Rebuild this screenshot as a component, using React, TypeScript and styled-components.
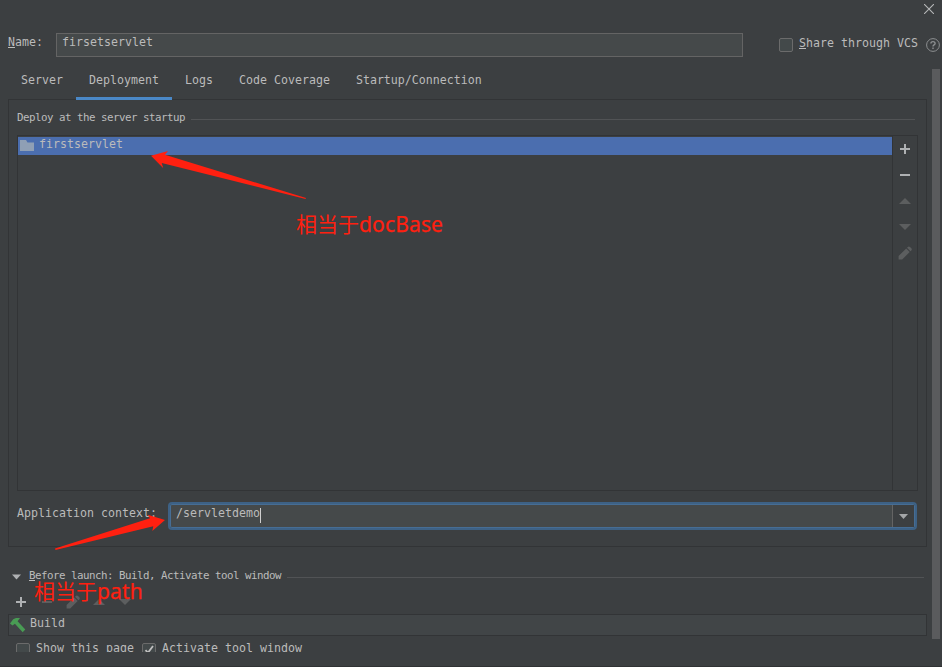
import React from 'react';
import styled, { createGlobalStyle } from 'styled-components';

const GlobalStyle = createGlobalStyle`
  * { box-sizing: border-box; }
  body {
    margin: 0;
    background: #3c3f41;
    overflow: hidden;
  }
`;

const line = '#323436';
const text = '#bbbbbb';

const Dialog = styled.div`
  position: relative;
  display: flex;
  flex-direction: column;
  width: 942px;
  height: 667px;
  overflow: hidden;
  background: #3c3f41;
  border-bottom: 1px solid #303234;
  color: ${text};
  font-family: 'DejaVu Sans Mono', monospace;
  font-size: 11.6px;
  letter-spacing: 0.016px;
  line-height: 16px;
  white-space: pre;
`;

const TitleBar = styled.header`
  display: flex;
  justify-content: flex-end;
  height: 33px;
  padding: 4px 8px 0 0;
`;

const NameRow = styled.div`
  display: flex;
  height: 24px;
  padding-left: 8px;
`;

const Label = styled.span<{ $width?: number }>`
  flex: none;
  width: ${(p) => (p.$width ? `${p.$width}px` : 'auto')};
`;

const NameLabel = styled(Label)`
  padding-top: 1px;
`;

const Mnemonic = styled.span`
  box-shadow: 0 -1px 0 ${text} inset;
  display: inline-block;
  height: 14px;
`;

const TextField = styled.div`
  width: 687px;
  height: 24px;
  padding: 0 5px;
  border: 1px solid #646464;
  background: #45494a;
`;

const ShareOption = styled.div`
  display: flex;
  margin-left: 36px;
  padding-top: 2px;
`;

const CheckBox = styled.span`
  display: block;
  flex: none;
  width: 14px;
  height: 14px;
  margin: 3px 6px 0 0;
  border: 1px solid #6b6b6b;
  border-radius: 2px;
  background: #43494a;

  svg { display: block; }
`;

const HelpSlot = styled.span`
  margin: 3px 0 0 8px;
  height: 14px;

  svg { display: block; }
`;

const Body = styled.div`
  display: flex;
  flex: 1;
  min-height: 0;
`;

const Main = styled.main`
  display: flex;
  flex-direction: column;
  width: 919px;
  margin-left: 8px;
`;

const ScrollTrack = styled.div`
  width: 8px;
  margin: 12px 0 0 5px;
`;

const ScrollThumb = styled.div`
  height: 570px;
  background: #5a5b5d;
`;

const Tabs = styled.nav`
  display: flex;
  height: 43px;
  margin-bottom: -1px;
`;

const Tab = styled.div<{ $active?: boolean }>`
  z-index: 1;
  padding: 15px 13px 0;
  border-bottom: 3px solid ${(p) => (p.$active ? '#4a88c7' : 'transparent')};
`;

const Panel = styled.section`
  display: flex;
  flex-direction: column;
  height: 448px;
  padding: 10px 8px 0;
  border: 1px solid ${line};
`;

const SectionTitle = styled.div`
  display: flex;
  height: 16px;
  font-size: 10.8px;
  letter-spacing: -0.502px;
  line-height: 16px;

  ${Mnemonic} { height: 13px; }
`;

const Rule = styled.div<{ $right: number; $top: number }>`
  flex: 1;
  height: 1px;
  margin: ${(p) => p.$top}px ${(p) => p.$right}px 0 6px;
  background: #515355;
`;

const ListBox = styled.div`
  display: flex;
  width: 901px;
  height: 356px;
  margin-top: 9px;
  border: 1px solid ${line};
`;

const Artifacts = styled.div`
  flex: 1;
  padding-top: 1px;
`;

const ArtifactRow = styled.div`
  display: flex;
  height: 18px;
  padding-left: 2px;
  background: #4b6eaf;
  gap: 5px;
  line-height: 14px;

  svg { display: block; margin-top: 3px; }
`;

const SideTools = styled.div`
  display: flex;
  flex-direction: column;
  align-items: center;
  width: 25px;
  padding-top: 5px;
  gap: 10px;
  border-left: 1px solid ${line};

  svg { display: block; flex: none; }
`;

const ContextRow = styled.div`
  display: flex;
  margin-top: 11px;
`;

const ContextLabel = styled(Label)`
  padding-top: 3px;
`;

const Combo = styled.div`
  display: flex;
  width: 749px;
  height: 28px;
  border: 2px solid #3d6185;
  border-radius: 4px;
  background: #45494a;
  box-shadow: inset 0 0 0 1px #466d94;
`;

const ComboValue = styled.div`
  display: flex;
  flex: 1;
  margin: 1px 0;
  padding: 0 0 0 6px;
  border-right: 1px solid #646464;
`;

const Caret = styled.span`
  width: 1px;
  height: 15px;
  margin-top: 3px;
  background: #cfcfcf;
`;

const ComboButton = styled.div`
  width: 21px;
  margin: 1px 1px 1px 0;
  padding: 9px 0 0 6px;
  background: #3c3f41;

  svg { display: block; }
`;

const LaunchTitle = styled(SectionTitle)`
  margin-top: 21px;
  padding-left: 4px;

  svg { display: block; margin: 6px 8px 0 0; }
`;

const LaunchTools = styled.div`
  display: flex;
  align-items: center;
  height: 22px;
  margin-top: 7px;
  padding-left: 5px;
  gap: 10px;
`;

const TaskRow = styled.div`
  display: flex;
  flex: none;
  height: 22px;
  margin-top: 1px;
  padding-left: 1px;
  border: 1px solid ${line};
  background: #414547;

  svg { display: block; margin: 2px 4px 0 0; }
`;

const Options = styled.div`
  display: flex;
  flex: none;
  height: 12px;
  margin-top: 4px;
  padding-left: 8px;
  overflow: hidden;
`;

const Option = styled.div`
  display: flex;
  margin-right: 8px;
`;

const Annotations = styled.svg`
  position: absolute;
  inset: 0;
  z-index: 2;
  fill: #ff2010;
`;

const Note = styled.div<{ $x: number; $y: number }>`
  position: absolute;
  z-index: 3;
  left: ${(p) => p.$x}px;
  top: ${(p) => p.$y}px;
  color: #ff2010;
  font: 21px/28px 'Noto Sans', 'Noto Sans CJK SC', sans-serif;
  letter-spacing: 0;
`;

const NoteTerm = styled.span`
  letter-spacing: 0.15px;
  -webkit-text-stroke: 0.25px #ff2010;
`;

type Shape = 'plus' | 'minus' | 'up' | 'down' | 'pencil';

const ToolIcon = ({ shape, off }: { shape: Shape; off?: boolean }) => (
  <svg width="16" height="16" viewBox="0 0 16 16" fill={off ? '#5c5e5f' : '#afb1b3'}>
    {shape === 'plus' && <path d="M7 3h2v4h4v2H9v4H7V9H3V7h4z" />}
    {shape === 'minus' && <path d="M3 7h10v2H3z" />}
    {shape === 'up' && <path d="M8 5l6 6H2z" />}
    {shape === 'down' && <path d="M2 5h12l-6 6z" />}
    {shape === 'pencil' && (
      <path d="M1.600 11 9.200 3.500l3.500 3.500L5.200 14.500H1.600zM10 2.700l.8-.8a1.600 1.600 0 0 1 2.200 0l1.300 1.300a1.600 1.600 0 0 1 0 2.200l-.8.8z" />
    )}
  </svg>
);

const sideTools: { shape: Shape; off?: boolean }[] = [
  { shape: 'plus' },
  { shape: 'minus' },
  { shape: 'up', off: true },
  { shape: 'down', off: true },
  { shape: 'pencil', off: true },
];

const launchTools: { shape: Shape; off?: boolean }[] = [
  { shape: 'plus' },
  { shape: 'minus', off: true },
  { shape: 'pencil', off: true },
  { shape: 'up', off: true },
  { shape: 'down', off: true },
];

const tabs = ['Server', 'Deployment', 'Logs', 'Code Coverage', 'Startup/Connection'];

export default function App() {
  return (
    <>
      <GlobalStyle />
      <Dialog>
        <TitleBar>
          <svg width="10" height="10" viewBox="0 0 10 10" stroke="#b5b7b8" strokeWidth="1.1">
            <path d="M0 0l10 10M10 0L0 10" />
          </svg>
        </TitleBar>
        <NameRow>
          <NameLabel $width={48}><Mnemonic>N</Mnemonic>ame:</NameLabel>
          <TextField>firsetservlet</TextField>
          <ShareOption>
            <CheckBox />
            <Label><Mnemonic>S</Mnemonic>hare through VCS</Label>
            <HelpSlot>
              <svg width="14" height="14" viewBox="0 0 14 14" fill="none" stroke="#8c8e90">
                <circle cx="7" cy="7" r="6.4" />
                <path d="M4.9 5.6c0-1.3.9-2 2.1-2s2.1.7 2.1 1.8c0 1.4-2.1 1.5-2.1 3M7 9.4v1.5" strokeWidth="1.4" />
              </svg>
            </HelpSlot>
          </ShareOption>
        </NameRow>
        <Body>
          <Main>
            <Tabs>
              {tabs.map((name) => (
                <Tab key={name} $active={name === 'Deployment'}>{name}</Tab>
              ))}
            </Tabs>
            <Panel>
              <SectionTitle>
                <Label>Deploy at the server startup</Label>
                <Rule $top={9} $right={3} />
              </SectionTitle>
              <ListBox>
                <Artifacts>
                  <ArtifactRow>
                    <svg width="14" height="12" viewBox="0 0 14 12" fill="#8f9fb5">
                      <path d="M0 0h6l1.500 2.500H14V11H0z" />
                    </svg>
                    <Label>firstservlet</Label>
                  </ArtifactRow>
                </Artifacts>
                <SideTools>
                  {sideTools.map((t) => <ToolIcon key={t.shape} {...t} />)}
                </SideTools>
              </ListBox>
              <ContextRow>
                <ContextLabel $width={151}>Application context:</ContextLabel>
                <Combo>
                  <ComboValue>
                    <Label>/servletdemo</Label>
                    <Caret />
                  </ComboValue>
                  <ComboButton>
                    <svg width="9" height="5" viewBox="0 0 9 5" fill="#a4a6a8"><path d="M0 0h9L4.500 5z" /></svg>
                  </ComboButton>
                </Combo>
              </ContextRow>
            </Panel>
            <LaunchTitle>
              <svg width="9" height="6" viewBox="0 0 9 6" fill="#afb1b3"><path d="M0 0.500h9L4.500 5.500z" /></svg>
              <Label><Mnemonic>B</Mnemonic>efore launch: Build, Activate tool window</Label>
              <Rule $top={9} $right={3} />
            </LaunchTitle>
            <LaunchTools>
              {launchTools.map((t) => <ToolIcon key={t.shape} {...t} />)}
            </LaunchTools>
            <TaskRow>
              <svg width="16" height="16" viewBox="0 0 16 16" fill="#499c54">
                <path d="M0 6.500 3.200 2.200 6 1h4L7.600 4.200l7.700 8.400-2.600 2.600L4.900 6.800 2.500 8.600z" />
              </svg>
              <Label>Build</Label>
            </TaskRow>
            <Options>
              <Option><CheckBox /><Label>Show this page</Label></Option>
              <Option>
                <CheckBox>
                  <svg width="12" height="12" viewBox="0 0 12 12" fill="none" stroke="#c0c0c0" strokeWidth="1.8">
                    <path d="M2.500 6.200 5 8.700 10 2" />
                  </svg>
                </CheckBox>
                <Label>Activate tool window</Label>
              </Option>
            </Options>
          </Main>
          <ScrollTrack><ScrollThumb /></ScrollTrack>
        </Body>
        <Annotations width="942" height="667" viewBox="0 0 942 667">
          <path d="M151 155.700 168 151 165 154.700 306 198 305.500 199 161.700 163 163.300 168.300z" />
          <path d="M165 520 147.700 514.700 150 518.300 55 548.600 55.500 550 153.300 526.300 152.300 531z" />
        </Annotations>
        <Note $x={296} $y={210}>相当于<NoteTerm>docBase</NoteTerm></Note>
        <Note $x={34} $y={577}>相当于<NoteTerm>path</NoteTerm></Note>
      </Dialog>
    </>
  );
}
